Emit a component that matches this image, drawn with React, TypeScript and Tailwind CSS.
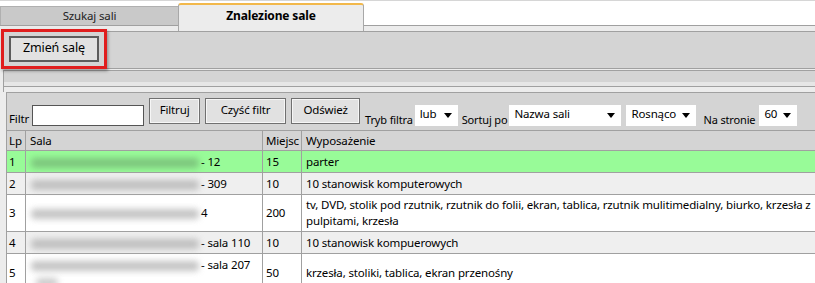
import React from "react";

const Arrow = () => (
  <svg width="8" height="5" viewBox="0 0 8 5" className="shrink-0">
    <polygon points="0,0 8,0 4,5" fill="#000" />
  </svg>
);

const Select = ({ label, w }: { label: string; w: string }) => (
  <div className={`${w} h-[21px] bg-white flex items-start justify-between pl-[5px] pr-[6px] pt-[2px] mb-[-1px]`}>
    <span className="leading-[14px]">{label}</span>
    <span className="pt-[6px]">
      <Arrow />
    </span>
  </div>
);

const Btn = ({ label, w }: { label: string; w: string }) => (
  <div
    className={`${w} h-[26px] mb-[1px] border border-[#707070] bg-[#e1e1e1] shadow-[inset_0_0_0_1px_#f6f6f6] flex items-center justify-center leading-none pb-[2px]`}
  >
    {label}
  </div>
);

const Blur = ({ w, green }: { w: string; green?: boolean }) => (
  <div className={`${w} h-[14px] shrink-0 relative`}>
    <div
      className={`absolute left-[1px] right-[2px] top-[3px] h-[10px] rounded-sm blur-[3px] ${
        green ? "bg-[#72b072]" : "bg-[#acacac]"
      } opacity-70`}
    />
  </div>
);

type Row = {
  lp: string;
  sala: string;
  miejsc: string;
  wyp: React.ReactNode;
  bg: string;
  h: string;
  green?: boolean;
  two?: boolean;
};

const rows: Row[] = [
  { lp: "1", sala: "- 12", miejsc: "15", wyp: "parter", bg: "bg-[#98fb98]", h: "h-[22px]", green: true },
  { lp: "2", sala: "- 309", miejsc: "10", wyp: "10 stanowisk komputerowych", bg: "bg-[#efefef]", h: "h-[22px]" },
  {
    lp: "3",
    sala: "4",
    miejsc: "200",
    wyp: (
      <>
        <span className="whitespace-nowrap">
          tv, DVD, stolik pod rzutnik, rzutnik do folii, ekran, tablica, rzutnik mulitimedialny, biurko, krzesła z
        </span>
        <br />
        pulpitami, krzesła
      </>
    ),
    bg: "bg-white",
    h: "h-[37px]",
  },
  { lp: "4", sala: "- sala 110", miejsc: "10", wyp: "10 stanowisk kompuerowych", bg: "bg-[#efefef]", h: "h-[22px]" },
  { lp: "5", sala: "- sala 207", miejsc: "50", wyp: "krzesła, stoliki, tablica, ekran przenośny", bg: "bg-white", h: "h-[38px]", two: true },
];

export default function App() {
  return (
    <div className="w-[815px] h-[283px] overflow-hidden bg-white relative text-[11.5px] tracking-[-0.15px] text-black font-['Noto_Sans',sans-serif]">
      {/* tabs */}
      <div className="h-[26px] border-t border-[#d6d6d6] border-b border-b-[#a0a0a0] flex items-end">
        <div className="w-[178px] h-[19px] bg-[#c9c9c9] border-t border-l border-[#b0b0b0] flex items-center justify-center text-[#222] pb-[1px]">
          Szukaj sali
        </div>
        <div className="w-[186px] h-[28px] mb-[-6px] relative z-10 bg-[#ececec] border-x border-[#a8a8a8] border-t-2 border-t-[#f2b84b] rounded-t-[3px] flex justify-center pt-[2px] font-bold text-[12px]">
          Znalezione sale
        </div>
      </div>
      {/* strip */}
      <div className="h-[5px] bg-[#ececec]" />
      {/* content */}
      <div className="bg-[#ececec]">
        <div className="h-[38px] border-y border-[#a0a0a0] bg-[#d4d4d4] ml-[3px] border-l pl-[5px] pt-[4px]">
          <div className="w-[90px] h-[26px] border-2 border-[#5c5c5c] bg-[#e2e2e2] flex items-center justify-center pb-[2px] text-[12.5px]">
            Zmień salę
          </div>
        </div>
        <div className="h-[1px]" />
        <div className="h-[17px] border-y border-[#a0a0a0] ml-[3px] border-l flex flex-col">
          <div className="flex-1 bg-[#d4d4d4]" />
          <div className="h-[4px] bg-[#e6e6e6]" />
        </div>
        <div className="h-[5px] ml-[3px] border-l border-[#a0a0a0]" />
        {/* filter panel */}
        <div className="ml-[6px] h-[39px] border-y border-l border-[#a0a0a0] bg-[#d4d4d4] flex items-end pb-[5px] pl-[2px]">
          <span className="leading-[14px] mb-[-1px]">Filtr</span>
          <div className="ml-[3px] w-[112px] h-[21px] bg-white border-[1.5px] border-[#555] mb-[-1px]" />
          <div className="ml-[5px]">
            <Btn label="Filtruj" w="w-[51px]" />
          </div>
          <div className="ml-[5px]">
            <Btn label="Czyść filtr" w="w-[81px]" />
          </div>
          <div className="ml-[5px]">
            <Btn label="Odśwież" w="w-[69px]" />
          </div>
          <span className="ml-[5px] leading-[14px] mb-[-2px] text-[11px]">Tryb filtra</span>
          <div className="ml-[2px]">
            <Select label="lub" w="w-[43px]" />
          </div>
          <span className="ml-[4px] leading-[14px] mb-[-2px] text-[11px]">Sortuj po</span>
          <div className="ml-[2px]">
            <Select label="Nazwa sali" w="w-[112px]" />
          </div>
          <div className="ml-[5px]">
            <Select label="Rosnąco" w="w-[70px]" />
          </div>
          <span className="ml-[7px] leading-[14px] mb-[-2px] text-[11px]">Na stronie</span>
          <div className="ml-[4px]">
            <Select label="60" w="w-[38px]" />
          </div>
        </div>
        {/* table */}
        <div className="ml-[6px] border-l border-[#a0a0a0] bg-white">
          <div className="flex h-[20px] bg-[#d4d4d4] border-b border-[#a0a0a0] leading-[19px]">
            <div className="w-[19px] shrink-0 border-r border-[#a0a0a0] pl-[2px]">Lp</div>
            <div className="w-[237px] shrink-0 border-r border-[#a0a0a0] pl-[4px]">Sala</div>
            <div className="w-[39px] shrink-0 border-r border-[#a0a0a0] pl-[3px] overflow-hidden whitespace-nowrap">Miejsc</div>
            <div className="flex-1 min-w-0 pl-[4px]">Wyposażenie</div>
          </div>
          {rows.map((r) => (
            <div key={r.lp} className={`flex ${r.h} ${r.bg} border-b border-[#a0a0a0] leading-[16px]`}>
              <div className="w-[19px] shrink-0 border-r border-[#a0a0a0] pl-[2px] flex items-center">{r.lp}</div>
              <div className="w-[237px] shrink-0 border-r border-[#a0a0a0] pl-[4px] flex flex-col justify-center">
                <div className="flex items-center">
                  <Blur w="w-[171px]" green={r.green} />
                  <span className="whitespace-nowrap">{r.sala}</span>
                </div>
                {r.two && (
                  <div className="h-[16px] relative">
                    <div className="absolute left-[6px] top-[5px] w-[22px] h-[9px] rounded-sm blur-[3px] bg-[#a9a9a9] opacity-60" />
                  </div>
                )}
              </div>
              <div className="w-[39px] shrink-0 border-r border-[#a0a0a0] pl-[3px] flex items-center">{r.miejsc}</div>
              <div className="flex-1 min-w-0 overflow-hidden pl-[4px] flex items-center">
                <div>{r.wyp}</div>
              </div>
            </div>
          ))}
        </div>
      </div>
      {/* red annotation */}
      <div className="absolute left-[1px] top-[29px] w-[106px] h-[40px] border-[3px] border-[#e01e1e] shadow-[1px_2px_3px_rgba(0,0,0,0.35)]" />
    </div>
  );
}
